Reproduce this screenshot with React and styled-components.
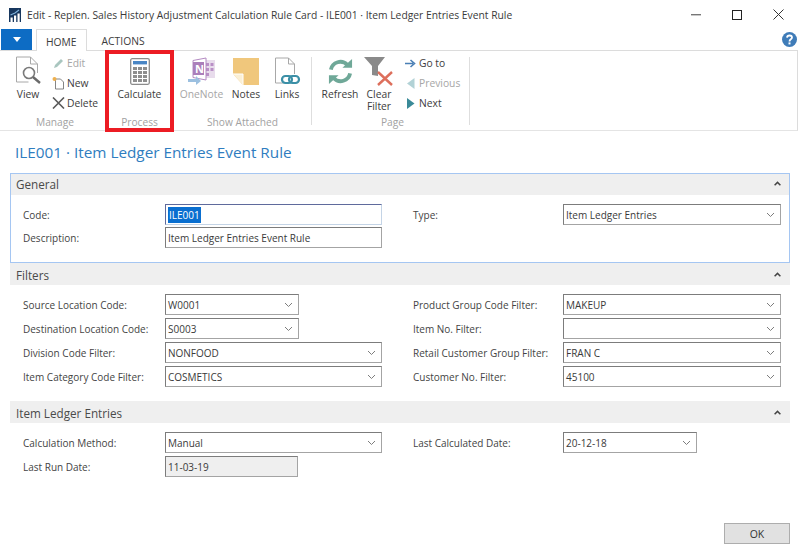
import React from "react";
import styled, { createGlobalStyle } from "styled-components";

const Global = createGlobalStyle`
  html, body { margin: 0; padding: 0; background: #fff; }
  body { font-family: "Open Sans", "Noto Sans", sans-serif; font-size: 10.5px; color: #3c3c3c; }
  * { box-sizing: border-box; }
`;

const Page = styled.div`
  width: 800px; height: 554px; display: flex; flex-direction: column; background: #fff; overflow: hidden;
`;
const TitleBar = styled.div`
  height: 29px; display: flex; align-items: center; padding-left: 9px; gap: 6px;
  font-size: 10.3px; color: #3a3a3a; flex: none;
`;
const WindowButtons = styled.div`
  margin-left: auto; display: flex; align-items: center; padding-right: 16px; gap: 31px;
`;
const TabRow = styled.div`
  height: 21px; display: flex; flex: none; align-items: stretch; position: relative; z-index: 1; padding-left: 1px;
`;
const FileButton = styled.div`
  width: 31px; height: 21px; background: #0d6cc4; display: flex; align-items: center; justify-content: center;
`;
const Tab = styled.div`
  height: ${p => (p.$active ? "22px" : "21px")}; margin-left: ${p => p.$gap}px; padding: 2px ${p => p.$pad}px 0;
  display: flex; align-items: center; font-size: 10.3px; color: #3c3c3c; background: #fff;
  border: ${p => (p.$active ? "1px solid #dcdcdc" : "1px solid transparent")}; border-bottom: none;
`;
const HelpWrap = styled.div`
  margin-left: auto; padding-right: 3px; display: flex; align-items: flex-start; padding-top: 3px;
  height: 21px;
`;
const Ribbon = styled.div`
  height: 81px; width: 798px; flex: none; display: flex; padding-left: 5px;
  border-top: 1px solid #dcdcdc; border-right: 1px solid #dcdcdc; border-bottom: 1px solid #e4e4e4;
`;
const Group = styled.div`
  width: ${p => p.$w}px; flex: none; display: flex; flex-direction: column; align-items: stretch;
  ${p => p.$highlight && "border: 4px solid #ec1c24; margin-top: -1px; margin-bottom: -2px; position: relative; z-index: 2;"}
`;
const GroupBody = styled.div`
  height: ${p => (p.$highlight ? 60 : 63)}px; flex: none; display: flex; padding-top: ${p => (p.$highlight ? 1 : 4)}px;
  padding-left: ${p => p.$pl || 0}px;
`;
const GroupLabel = styled.div`
  height: 16px; text-align: center; font-size: 10.2px; color: #a2a2a2; line-height: 16px;
  padding-left: ${p => p.$pl || 0}px;
`;
const Separator = styled.div`
  width: 1px; flex: none; background: #dedede; margin: 6px 0 5px;
`;
const BigButton = styled.div`
  width: ${p => p.$w}px; flex: none; display: flex; flex-direction: column; align-items: center;
  font-size: 10.3px; line-height: 12px; text-align: center; color: ${p => (p.$off ? "#a6a6a6" : "#3c3c3c")};
`;
const BigIcon = styled.div`
  height: 32px; display: flex; align-items: center; justify-content: center; margin-bottom: 1px; flex: none;
`;
const SmallCol = styled.div`
  display: flex; flex-direction: column; margin-left: ${p => p.$ml || 0}px; margin-top: -2px;
`;
const SmallButton = styled.div`
  height: 20px; display: flex; align-items: center; gap: 2px; font-size: 10.3px;
  color: ${p => (p.$off ? "#a6a6a6" : "#3c3c3c")}; white-space: nowrap;
`;
const SmallIcon = styled.span`
  width: 13px; height: 14px; display: flex; align-items: center; justify-content: center; flex: none;
`;
const PageTitle = styled.h1`
  margin: 0; padding: 11px 0 0 15px; height: 42px; flex: none; font-weight: 400; font-size: 15.3px; line-height: 21px; color: #2f7dc0;
`;
const Content = styled.div`
  flex: none; padding-left: 10px; width: 790px; display: flex; flex-direction: column;
`;
const Section = styled.section`
  height: ${p => p.$h}px; flex: none; border: 1px solid ${p => (p.$focus ? "#a5c6f2" : "transparent")};
  ${p => !p.$focus && "border-width: 0;"}
  margin-bottom: ${p => p.$mb || 0}px;
`;
const SectionHeader = styled.div`
  height: ${p => (p.$focus ? 21 : 22)}px; background: #efefef; display: flex; align-items: center; justify-content: space-between;
  padding: ${p => (p.$focus ? "0 8px 2px 5px" : "1px 9px 0 6px")}; font-size: 11.7px; color: #4a4a4a;
`;
const Fields = styled.div`
  display: grid; grid-template-columns: 390px 1fr; padding-top: 9px;
  padding-left: ${p => (p.$focus ? 12 : 13)}px;
`;
const Column = styled.div`
  display: flex; flex-direction: column; gap: ${p => (p.$tight ? 2 : 3)}px;
`;
const Field = styled.div`
  display: grid; grid-template-columns: ${p => p.$label}px auto; justify-content: start; align-items: center; height: 21px;
`;
const Label = styled.div`
  font-size: 10px; color: #444; white-space: nowrap;
`;
const Input = styled.div`
  width: ${p => p.$w}px; height: 21px; display: flex; align-items: center; justify-content: space-between;
  padding: 0 5px 0 2px; font-size: 10px; color: #3a3a3a; background: ${p => (p.$ro ? "#efefef" : "#fff")};
  border: 1px solid #a4a4a4; border-top-color: #7c7c7c; border-left-color: #7c7c7c;
  ${p => p.$focus && "border-color: #5f6a9c #c4d4e6 #c4d4e6 #5f6a9c;"}
`;
const Selected = styled.span`
  background: #0a6fd0; color: #fff; padding: 1px 1px;
`;
const Footer = styled.div`
  margin-top: auto; display: flex; justify-content: flex-end; padding: 0 10px 10px 0;
`;
const OkButton = styled.button`
  width: 66px; height: 21px; background: #e1e1e1; border: 1px solid #adadad; font: inherit; font-size: 10.5px; color: #333; padding: 0;
`;

const Chevron = () => (
  <svg width="9" height="6" viewBox="0 0 9 6"><path d="M1 1l3.5 3.5L8 1" fill="none" stroke="#7d7d7d" strokeWidth="1" /></svg>
);
const Collapse = () => (
  <svg width="7" height="5" viewBox="0 0 7 5"><path d="M0.6 4.2L3.5 1.4 6.4 4.2" fill="none" stroke="#444" strokeWidth="1.5" /></svg>
);

const AppLogo = () => (
  <svg width="12" height="14" viewBox="0 0 12 14">
    <path d="M0 0h12v14H0z" fill="#17375e" />
    <path d="M1.5 9.5h2.2V14H1.5zM5 7.5h2.2V14H5zM8.5 5.5h2.2V14H8.5z" fill="#fff" />
    <path d="M1.5 7L6 5l4-3" fill="none" stroke="#7fb2dc" strokeWidth="1.1" />
  </svg>
);
const DocView = () => (
  <svg width="27" height="30" viewBox="0 0 27 30">
    <path d="M1.5 1h14l7 7v9M1.5 1v25h12" fill="none" stroke="#a8a8a8" strokeWidth="1" />
    <path d="M15.5 1v7h7" fill="none" stroke="#a8a8a8" />
    <circle cx="14" cy="17" r="5.5" fill="#fff" stroke="#7a7a7a" strokeWidth="1.6" />
    <path d="M18 21l7 6" stroke="#6a6a6a" strokeWidth="2.4" />
  </svg>
);
const Calculator = () => (
  <svg width="20" height="27" viewBox="0 0 20 27">
    <rect x="0.7" y="0.7" width="18.6" height="25.6" rx="1.5" fill="#fff" stroke="#8c8c8c" strokeWidth="1.3" />
    <rect x="3" y="3" width="14" height="3.4" fill="#4a86c5" />
    {[9, 13, 17, 21].flatMap(y => [3, 8, 13].map(x => <rect key={`${x}-${y}`} x={x} y={y} width="4" height="3" fill="#8e8e8e" />))}
  </svg>
);
const OneNote = () => (
  <svg width="27" height="28" viewBox="0 0 27 28">
    <path d="M14 3h13v18H14z" fill="#e8dcec" />
    <path d="M18 6h3v3h-3zM22.5 6h3v3h-3zM18 11h3v3h-3zM22.5 11h3v3h-3zM18 16h3v3h-3z" fill="#b98fc6" />
    <path d="M5 3.5L18 1v22L5 20.5z" fill="#fff" stroke="#b48ac2" strokeWidth="1" />
    <path d="M5 5h11v13H5z" fill="#ab7fba" />
    <text x="7" y="16" fontFamily="Open Sans" fontWeight="700" fontSize="11" fill="#fff">N</text>
    <path d="M0 22h8v-3l5 5-5 4v-3H0z" fill="#9cc0e0" />
  </svg>
);
const Notes = () => (
  <svg width="26" height="27" viewBox="0 0 26 27">
    <path d="M0 0h26v27H10L0 16z" fill="#f0c77c" />
    <path d="M0 16h10v11z" fill="#fbf0d6" />
    <path d="M0 16h10v11" fill="none" stroke="#fff" />
  </svg>
);
const Links = () => (
  <svg width="27" height="28" viewBox="0 0 27 28">
    <path d="M1.5 26V1h13l6 6v10M14.5 1v6h6M1.5 26h8" fill="none" stroke="#a8a8a8" />
    <rect x="8" y="19" width="10" height="7" rx="3.5" fill="none" stroke="#3b8fa6" strokeWidth="2.2" />
    <rect x="15" y="19" width="10" height="7" rx="3.5" fill="none" stroke="#3b8fa6" strokeWidth="2.2" />
  </svg>
);
const Refresh = () => (
  <svg width="25" height="25" viewBox="0 0 26 26">
    <path d="M3 11A10 10 0 0 1 20 6" fill="none" stroke="#6fa898" strokeWidth="4" />
    <path d="M15 9h10V0z" fill="#6fa898" />
    <path d="M23 15A10 10 0 0 1 6 20" fill="none" stroke="#6fa898" strokeWidth="4" />
    <path d="M11 17H1v9z" fill="#6fa898" />
  </svg>
);
const ClearFilter = () => (
  <svg width="30" height="29" viewBox="0 0 30 29">
    <path d="M0 0h21l-7 9v10l-6-1V9z" fill="#8a8a8a" />
    <path d="M14 15l14 13M28 15L14 28" stroke="#dd6f5c" strokeWidth="2.4" />
  </svg>
);
const Pencil = () => (
  <svg width="11" height="11" viewBox="0 0 11 11"><path d="M1 10l1-3 6-6 2 2-6 6z" fill="#a9c6bf" /></svg>
);
const NewDoc = () => (
  <svg width="13" height="14" viewBox="0 0 13 14">
    <path d="M3.5 13V3h5l3 3v7z" fill="#fff" stroke="#777" strokeWidth="0.9" />
    <circle cx="2.5" cy="3" r="2" fill="#eeb04e" />
  </svg>
);
const DeleteX = () => (
  <svg width="13" height="12" viewBox="0 0 13 12"><path d="M1 0.5l11 11M12 0.5l-11 11" stroke="#5a5a5a" strokeWidth="1.6" /></svg>
);
const GoTo = () => (
  <svg width="11" height="9" viewBox="0 0 11 9"><path d="M0 4.5h8M5.5 1l4 3.5-4 3.5" fill="none" stroke="#4a7fb5" strokeWidth="1.6" /></svg>
);
const PrevIcon = () => (
  <svg width="8" height="11" viewBox="0 0 8 11"><path d="M7.5 0v11L0 5.5z" fill="#b2d2d6" /></svg>
);
const NextIcon = () => (
  <svg width="8" height="11" viewBox="0 0 8 11"><path d="M0 0v11l7.5-5.5z" fill="#3a8a98" /></svg>
);
const Help = () => (
  <svg width="15" height="15" viewBox="0 0 15 15">
    <circle cx="7.5" cy="7.5" r="7.5" fill="#3f7cb8" />
    <path d="M5 5.6C5.2 2.8 10 2.8 10 5.6 10 7.4 7.5 7.3 7.5 9.4" fill="none" stroke="#fff" strokeWidth="1.8" />
    <rect x="6.5" y="10.4" width="2" height="2" fill="#fff" />
  </svg>
);

const Select = ({ w, children }) => (
  <Input $w={w}><span>{children}</span><Chevron /></Input>
);

export default function App() {
  return (
    <Page>
      <Global />
      <TitleBar>
        <AppLogo />
        <span>Edit - Replen. Sales History Adjustment Calculation Rule Card - ILE001 · Item Ledger Entries Event Rule</span>
        <WindowButtons>
          <svg width="10" height="2" viewBox="0 0 10 2"><rect width="10" height="1.4" fill="#777" /></svg>
          <svg width="10" height="10" viewBox="0 0 10 10"><rect x="0.5" y="0.5" width="9" height="9" fill="none" stroke="#222" /></svg>
          <svg width="11" height="11" viewBox="0 0 11 11"><path d="M0.5 0.5l10 10M10.5 0.5l-10 10" stroke="#333" /></svg>
        </WindowButtons>
      </TitleBar>
      <TabRow>
        <FileButton>
          <svg width="8" height="5" viewBox="0 0 8 5"><path d="M0 0h8L4 5z" fill="#fff" /></svg>
        </FileButton>
        <Tab $active $gap={4} $pad={9}>HOME</Tab>
        <Tab $gap={5} $pad={9}>ACTIONS</Tab>
        <HelpWrap><Help /></HelpWrap>
      </TabRow>
      <Ribbon>
        <Group $w={100}>
          <GroupBody>
            <BigButton $w={46}><BigIcon><DocView /></BigIcon>View</BigButton>
            <SmallCol $ml={1}>
              <SmallButton $off><SmallIcon><Pencil /></SmallIcon>Edit</SmallButton>
              <SmallButton><SmallIcon><NewDoc /></SmallIcon>New</SmallButton>
              <SmallButton><SmallIcon><DeleteX /></SmallIcon>Delete</SmallButton>
            </SmallCol>
          </GroupBody>
          <GroupLabel>Manage</GroupLabel>
        </Group>
        <Group $w={69} $highlight>
          <GroupBody $highlight>
            <BigButton $w={61}><BigIcon><Calculator /></BigIcon>Calculate</BigButton>
          </GroupBody>
          <GroupLabel>Process</GroupLabel>
        </Group>
        <Group $w={137}>
          <GroupBody>
            <BigButton $w={55} $off><BigIcon><OneNote /></BigIcon>OneNote</BigButton>
            <BigButton $w={34}><BigIcon><Notes /></BigIcon>Notes</BigButton>
            <BigButton $w={48}><BigIcon><Links /></BigIcon>Links</BigButton>
          </GroupBody>
          <GroupLabel>Show Attached</GroupLabel>
        </Group>
        <Separator />
        <Group $w={157}>
          <GroupBody $pl={4}>
            <BigButton $w={48}><BigIcon><Refresh /></BigIcon>Refresh</BigButton>
            <BigButton $w={30}><BigIcon><ClearFilter /></BigIcon>Clear Filter</BigButton>
            <SmallCol $ml={10}>
              <SmallButton><SmallIcon><GoTo /></SmallIcon>Go to</SmallButton>
              <SmallButton $off><SmallIcon><PrevIcon /></SmallIcon>Previous</SmallButton>
              <SmallButton><SmallIcon><NextIcon /></SmallIcon>Next</SmallButton>
            </SmallCol>
          </GroupBody>
          <GroupLabel $pl={4}>Page</GroupLabel>
        </Group>
        <Separator />
      </Ribbon>
      <PageTitle>ILE001 · Item Ledger Entries Event Rule</PageTitle>
      <Content>
        <Section $focus $h={90}>
          <SectionHeader $focus>General<Collapse /></SectionHeader>
          <Fields $focus>
            <Column $tight>
              <Field $label={142}><Label>Code:</Label><Input $w={217} $focus><span><Selected>ILE001</Selected></span></Input></Field>
              <Field $label={142}><Label>Description:</Label><Input $w={217}>Item Ledger Entries Event Rule</Input></Field>
            </Column>
            <Column $tight>
              <Field $label={150}><Label>Type:</Label><Select w={218}>Item Ledger Entries</Select></Field>
            </Column>
          </Fields>
        </Section>
        <Section $h={115} $mb={23}>
          <SectionHeader>Filters<Collapse /></SectionHeader>
          <Fields>
            <Column>
              <Field $label={142}><Label>Source Location Code:</Label><Select w={134}>W0001</Select></Field>
              <Field $label={142}><Label>Destination Location Code:</Label><Select w={134}>S0003</Select></Field>
              <Field $label={142}><Label>Division Code Filter:</Label><Select w={217}>NONFOOD</Select></Field>
              <Field $label={142}><Label>Item Category Code Filter:</Label><Select w={217}>COSMETICS</Select></Field>
            </Column>
            <Column>
              <Field $label={150}><Label>Product Group Code Filter:</Label><Select w={218}>MAKEUP</Select></Field>
              <Field $label={150}><Label>Item No. Filter:</Label><Select w={218}></Select></Field>
              <Field $label={150}><Label>Retail Customer Group Filter:</Label><Select w={218}>FRAN C</Select></Field>
              <Field $label={150}><Label>Customer No. Filter:</Label><Select w={218}>45100</Select></Field>
            </Column>
          </Fields>
        </Section>
        <Section $h={80}>
          <SectionHeader>Item Ledger Entries<Collapse /></SectionHeader>
          <Fields>
            <Column>
              <Field $label={142}><Label>Calculation Method:</Label><Select w={217}>Manual</Select></Field>
              <Field $label={142}><Label>Last Run Date:</Label><Input $w={133} $ro>11-03-19</Input></Field>
            </Column>
            <Column>
              <Field $label={150}><Label>Last Calculated Date:</Label><Select w={134}>20-12-18</Select></Field>
            </Column>
          </Fields>
        </Section>
      </Content>
      <Footer><OkButton>OK</OkButton></Footer>
    </Page>
  );
}
